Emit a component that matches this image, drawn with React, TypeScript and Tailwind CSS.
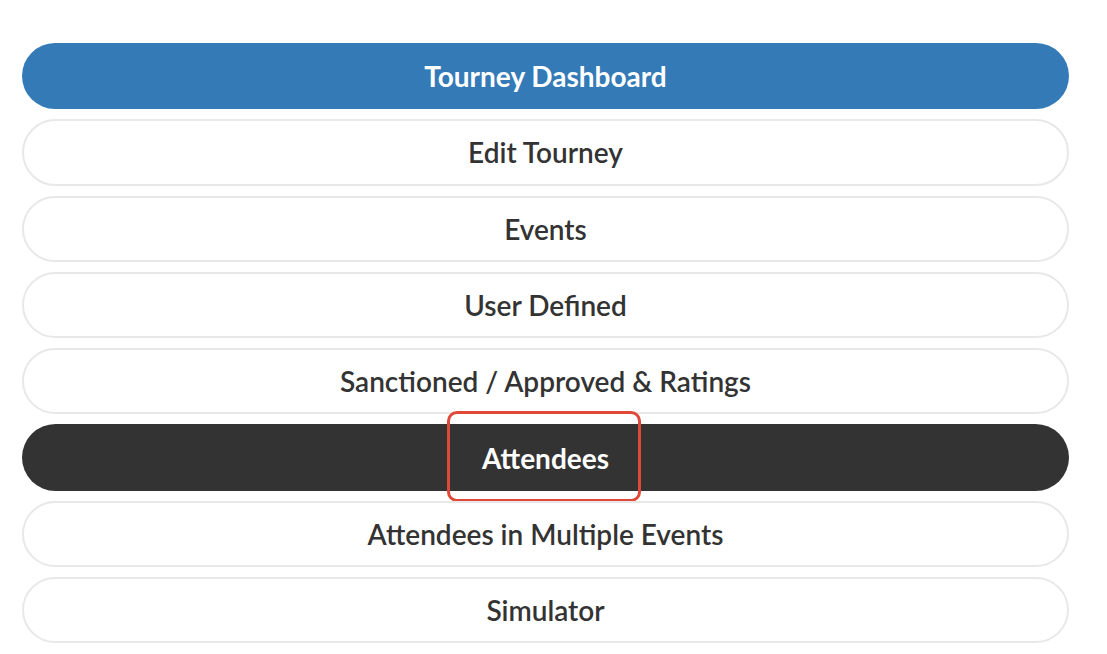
import React from "react";

const items = [
  { label: "Tourney Dashboard", kind: "primary" },
  { label: "Edit Tourney", kind: "default" },
  { label: "Events", kind: "default" },
  { label: "User Defined", kind: "default" },
  { label: "Sanctioned / Approved & Ratings", kind: "default" },
  { label: "Attendees", kind: "active" },
  { label: "Attendees in Multiple Events", kind: "default" },
  { label: "Simulator", kind: "default" },
];

export default function App() {
  return (
    <div className="w-[1107px] h-[654px] bg-white overflow-hidden font-['Lato','Liberation_Sans',sans-serif]">
      <div className="flex flex-col gap-[10px] pt-[43px] pl-[22px] pr-[38px]">
        {items.map((it) => (
          <div key={it.label} className="relative">
            <button
              type="button"
              className={`w-full h-[66.3px] rounded-full flex items-center justify-center text-[28px] ${
                it.kind === "primary"
                  ? "bg-[#337ab7] text-white font-bold"
                  : it.kind === "active"
                  ? "bg-[#333333] text-white font-bold"
                  : "bg-white text-[#333333] font-semibold border-2 border-[#e8e8e8]"
              }`}
            >
              {it.label}
            </button>
            {it.kind === "active" && (
              <div className="absolute left-[425px] top-[-13px] w-[194px] h-[91px] rounded-[10px] border-[3px] border-[#e0483a] pointer-events-none" />
            )}
          </div>
        ))}
      </div>
    </div>
  );
}
